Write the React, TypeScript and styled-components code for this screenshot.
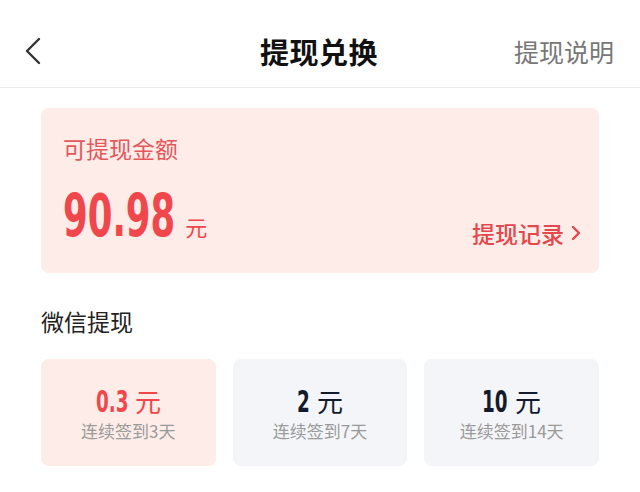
import React from "react";
import styled, { createGlobalStyle } from "styled-components";

const GlobalStyle = createGlobalStyle`
  html, body {
    margin: 0;
    padding: 0;
    background: #ffffff;
  }
  body {
    font-family: "Noto Sans CJK SC", "Noto Sans", sans-serif;
  }
`;

const NUM_FONT = `"DejaVu Sans Condensed", "DejaVu Sans", sans-serif`;

// the numbers in the design use a very narrow bold face; squeeze DejaVu Condensed
const SQUEEZE = 0.68;
const textWidth = (text: string, size: number) =>
  text.split("").reduce((w, ch) => w + (ch === "." ? 0.342 : 0.626), 0) * size;

const Page = styled.div`
  width: 640px;
  min-height: 492px;
  background: #fff;
`;

const Header = styled.div`
  height: 88px;
  display: grid;
  grid-template-columns: 1fr auto 1fr;
  align-items: center;
  border-bottom: 1px solid #ececec;
  box-sizing: border-box;
  padding: 14px 26px 0 24px;
`;

const Back = styled.div`
  display: flex;
  align-items: center;
`;

const Title = styled.div`
  font-size: 29px;
  font-weight: 700;
  color: #111;
  letter-spacing: 0.5px;
`;

const HeaderLink = styled.div`
  justify-self: end;
  font-size: 25px;
  color: #777;
`;

const Content = styled.div`
  padding: 20px 41px 0;
`;

const BalanceCard = styled.div`
  background: #fdece8;
  border-radius: 8px;
  height: 165px;
  box-sizing: border-box;
  padding: 25px 18px 0 22px;
  display: flex;
  flex-direction: column;
`;

const BalanceLabel = styled.div`
  font-size: 23px;
  color: #e4575b;
  line-height: 30px;
`;

const BalanceRow = styled.div`
  margin-top: 24px;
  display: flex;
  align-items: flex-end;
  justify-content: space-between;
`;

const Amount = styled.div`
  display: flex;
  align-items: baseline;
  color: #f0474c;
`;

const Squeezed = styled.span<{ $size: number; $shrink: number }>`
  display: inline-block;
  font-family: ${NUM_FONT};
  font-weight: 700;
  font-size: ${(p) => p.$size}px;
  line-height: 1;
  transform: scaleX(${SQUEEZE});
  transform-origin: left bottom;
  margin-right: ${(p) => -p.$shrink}px;
`;

const Unit = styled.span<{ $size: number; $color: string; $gap: number }>`
  font-size: ${(p) => p.$size}px;
  color: ${(p) => p.$color};
  margin-left: ${(p) => p.$gap}px;
`;

const RecordLink = styled.div`
  display: flex;
  align-items: center;
  gap: 7px;
  font-size: 23px;
  font-weight: 500;
  color: #e4474c;
  margin-bottom: -5px;
`;

const SectionTitle = styled.div`
  margin-top: 33px;
  font-size: 23px;
  color: #222;
  line-height: 30px;
`;

const Tiles = styled.div`
  margin-top: 23px;
  display: grid;
  grid-template-columns: repeat(3, 1fr);
  gap: 17px;
`;

const Tile = styled.div<{ $active?: boolean }>`
  height: 107px;
  border-radius: 8px;
  background: ${(p) => (p.$active ? "#fdece8" : "#f3f5f8")};
  display: flex;
  flex-direction: column;
  align-items: center;
  justify-content: center;
  box-sizing: border-box;
`;

const TileAmount = styled.div<{ $active?: boolean }>`
  display: flex;
  align-items: baseline;
  color: ${(p) => (p.$active ? "#f0474c" : "#121a2b")};
  line-height: 36px;
`;

const TileNote = styled.div`
  font-size: 17px;
  color: #9a9a9a;
  line-height: 22px;
  margin-top: 1px;
`;

const tiles = [
  { value: "0.3", days: 3, active: true },
  { value: "2", days: 7 },
  { value: "10", days: 14 },
];

function Num({ text, size }: { text: string; size: number }) {
  const shrink = textWidth(text, size) * (1 - SQUEEZE);
  return (
    <Squeezed $size={size} $shrink={shrink}>
      {text}
    </Squeezed>
  );
}

export default function App() {
  return (
    <Page>
      <GlobalStyle />
      <Header>
        <Back>
          <svg width="18" height="28" viewBox="0 0 18 28">
            <path d="M15 2 L3 14 L15 26" fill="none" stroke="#333" strokeWidth="2.4" strokeLinecap="round" strokeLinejoin="round" />
          </svg>
        </Back>
        <Title>提现兑换</Title>
        <HeaderLink>提现说明</HeaderLink>
      </Header>
      <Content>
        <BalanceCard>
          <BalanceLabel>可提现金额</BalanceLabel>
          <BalanceRow>
            <Amount>
              <Num text="90.98" size={58} />
              <Unit $size={22} $color="#f0474c" $gap={10}>元</Unit>
            </Amount>
            <RecordLink>
              提现记录
              <svg width="10" height="16" viewBox="0 0 10 16">
                <path d="M2 2 L8 8 L2 14" fill="none" stroke="#e4474c" strokeWidth="2.4" strokeLinecap="round" strokeLinejoin="round" />
              </svg>
            </RecordLink>
          </BalanceRow>
        </BalanceCard>
        <SectionTitle>微信提现</SectionTitle>
        <Tiles>
          {tiles.map((t) => (
            <Tile key={t.value} $active={t.active}>
              <TileAmount $active={t.active}>
                <Num text={t.value} size={30} />
                <Unit $size={26} $color={t.active ? "#f0474c" : "#121a2b"} $gap={7}>元</Unit>
              </TileAmount>
              <TileNote>连续签到{t.days}天</TileNote>
            </Tile>
          ))}
        </Tiles>
      </Content>
    </Page>
  );
}
